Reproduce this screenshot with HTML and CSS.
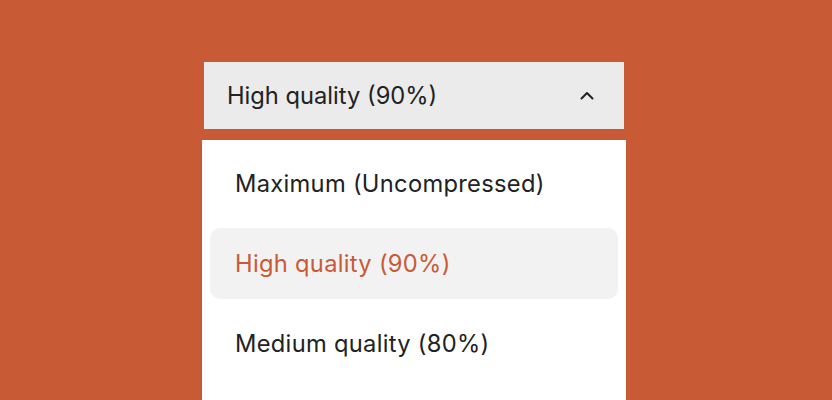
FILE: index.html
```html
<!DOCTYPE html>
<html>
<head>
<meta charset="utf-8">
<link rel="stylesheet" href="styles.css">
</head>
<body>
<div class="stage">
  <div class="select">
    <button class="trigger">
      <span class="value">High quality (90%)</span>
      <svg class="chev" width="14" height="9" viewBox="0 0 14 9"><path d="M1.5 7.5 L7 2 L12.5 7.5" fill="none" stroke="#222" stroke-width="2" stroke-linecap="round" stroke-linejoin="round"/></svg>
    </button>
    <ul class="menu">
      <li class="item">Maximum (Uncompressed)</li>
      <li class="item selected">High quality (90%)</li>
      <li class="item">Medium quality (80%)</li>
    </ul>
  </div>
</div>
</body>
</html>
```
FILE: styles.css
```css
html, body {
  margin: 0;
  padding: 0;
  height: 100%;
  overflow: hidden;
}
body {
  background: #c95a36;
  font-family: Inter, "Noto Sans", sans-serif;
}
.stage {
  display: flex;
  justify-content: center;
  padding: 62px 4px 0 0;
}
.select {
  width: 424px;
  display: flex;
  flex-direction: column;
  align-items: center;
}
.trigger {
  width: 420px;
  height: 67px;
  box-sizing: border-box;
  border: none;
  background: #ebebeb;
  display: flex;
  align-items: center;
  justify-content: space-between;
  padding: 0 30px 0 23px;
  font-family: inherit;
  font-size: 23.7px;
  color: #222;
  margin: 0;
}
.chev {
  width: 14px;
  height: 9px;
}
.menu {
  list-style: none;
  margin: 11px 0 0;
  padding: 8px;
  width: 424px;
  box-sizing: border-box;
  background: #fff;
  display: flex;
  flex-direction: column;
  gap: 9px;
  height: 260px;
  overflow: hidden;
}
.item {
  flex: none;
  height: 71px;
  display: flex;
  align-items: center;
  padding-left: 25px;
  font-size: 23.7px;
  letter-spacing: 0.3px;
  color: #222;
  border-radius: 10px;
}
.item.selected {
  background: #f2f2f2;
  color: #c95a36;
}
```
